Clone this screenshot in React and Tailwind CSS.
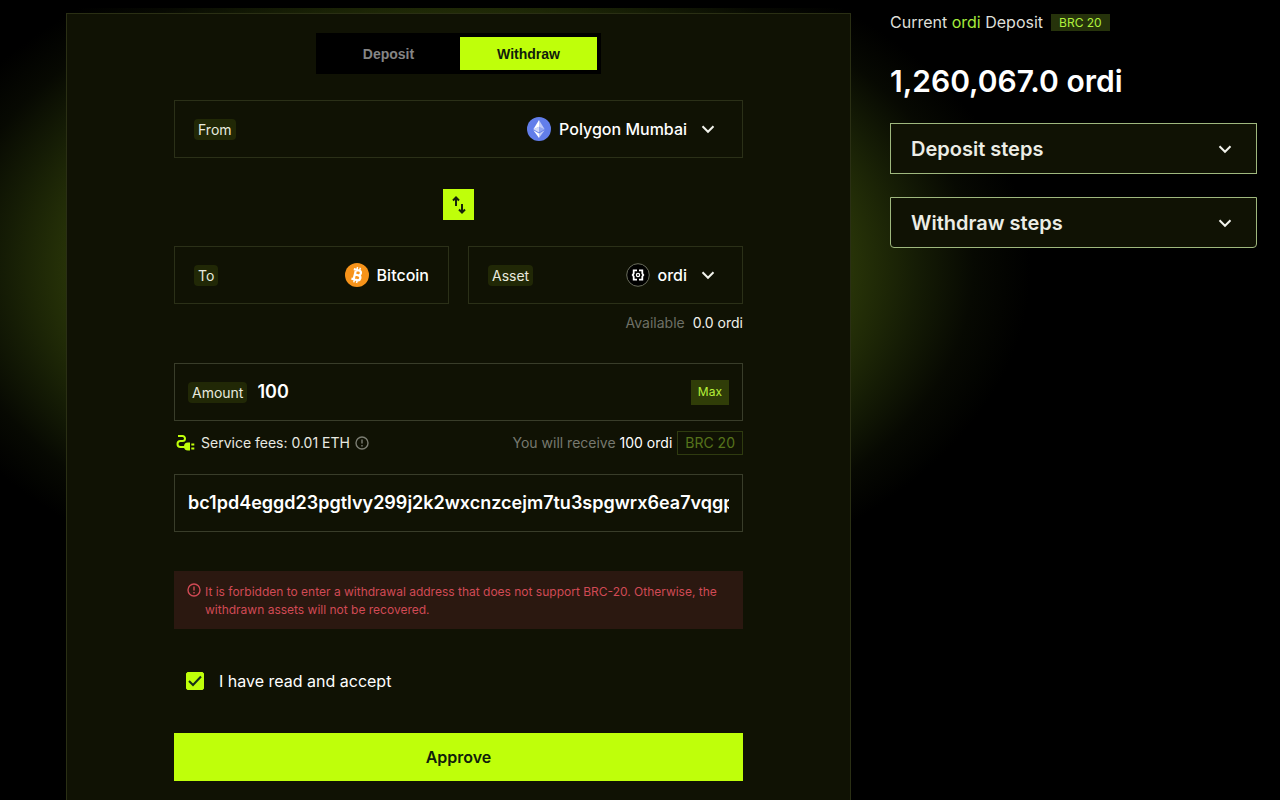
import React, { useState } from 'react';

const TAG = 'rounded bg-[#212806] px-1 text-sm leading-[21px] text-[#e8eadf]';
const BOX = 'flex h-[58px] items-center border';

function Chevron() {
  return (
    <svg viewBox="0 0 24 24" className="size-[22px] shrink-0" fill="none" stroke="#f2f3ec" strokeWidth="2.2" aria-hidden="true">
      <path d="M6 9l6 6 6-6" />
    </svg>
  );
}

function EthIcon() {
  return (
    <svg viewBox="0 0 32 32" className="size-6 shrink-0" aria-hidden="true">
      <circle cx="16" cy="16" r="16" fill="#627eea" />
      <g fill="#fff">
        <path fillOpacity=".6" d="M16 4v8.87l7.5 3.35z" />
        <path d="M16 4L8.5 16.22l7.5-3.35z" />
        <path fillOpacity=".6" d="M16 21.97V28l7.5-10.38z" />
        <path d="M16 28v-6.03l-7.5-4.35z" />
        <path fillOpacity=".3" d="M16 20.57l7.5-4.35-7.5-3.35z" />
        <path fillOpacity=".7" d="M8.5 16.22l7.5 4.35v-7.7z" />
      </g>
    </svg>
  );
}

function BtcIcon() {
  return (
    <svg viewBox="0 0 32 32" className="size-6 shrink-0" aria-hidden="true">
      <circle cx="16" cy="16" r="16" fill="#f7931a" />
      <g transform="rotate(14 16 16)" fill="none" stroke="#fff" strokeWidth="3">
        <path d="M10 9.5h7.2a3.2 3.2 0 0 1 0 6.5H13M17.2 16h.8a3.3 3.3 0 0 1 0 6.6h-8M13 9.5v13" />
        <path strokeWidth="2" d="M14.2 5.5v4M18 5.5v4M14.2 22.5v4M18 22.5v4" />
      </g>
    </svg>
  );
}

function OrdiIcon() {
  return (
    <svg viewBox="0 0 24 24" className="size-6 shrink-0" fill="none" aria-hidden="true">
      <circle cx="12" cy="12" r="11.3" fill="#000" stroke="#6a6d5c" />
      <g stroke="#fff" strokeWidth="1.8">
        <path d="M11 7.3H7.7v3.2L6.7 12l1 1.5v3.2H11M13 7.3h3.3v3.2l1 1.5-1 1.5v3.2H13" />
        <circle cx="12" cy="12" r="1.6" strokeWidth="1.3" />
      </g>
    </svg>
  );
}

function PlugIcon() {
  return (
    <svg viewBox="0 0 20 18" className="h-[18px] w-5 shrink-0" aria-hidden="true">
      <path d="M2 2h4.5a2.5 2.5 0 0 1 0 5H4.500a3 3 0 0 0 0 6H9" fill="none" stroke="#bfff0a" strokeWidth="2" />
      <path d="M14 8.500v8h-2a4 4 0 0 1-4-4 4 4 0 0 1 4-4zM15.300 9.500h3v2h-3zM15.300 13.500h3v2h-3z" fill="#bfff0a" />
    </svg>
  );
}

function InfoIcon() {
  return (
    <svg viewBox="0 0 14 14" className="size-[14px] shrink-0" fill="none" stroke="currentColor" strokeWidth="1.4" aria-hidden="true">
      <circle cx="7" cy="7" r="6" />
      <path d="M7 3.6v4M7 9v1.4" />
    </svg>
  );
}

function Steps({ title, className }) {
  return (
    <button type="button" className={`flex h-[51px] items-center justify-between border border-[#9fb87e] bg-[#101204] px-5 text-left ${className}`}>
      <span className="text-xl font-semibold text-[#ecede6]">{title}</span>
      <Chevron />
    </button>
  );
}

export default function App() {
  const [tab, setTab] = useState('withdraw');
  const [amount, setAmount] = useState('100');
  const [address, setAddress] = useState('bc1pd4eggd23pgtlvy299j2k2wxcnzcejm7tu3spgwrx6ea7vqgp9sx0k4');
  const [accepted, setAccepted] = useState(true);

  const tabStyle = (name) =>
    `w-[137px] cursor-pointer text-sm font-bold ${tab === name ? 'bg-[#bfff0a] text-[#10200a]' : 'text-[#858585]'}`;

  return (
    <div className="flex min-h-screen flex-col bg-black pt-2 font-['Inter',sans-serif] text-white">
      <main className="grid flex-1 grid-cols-[minmax(0,785fr)_minmax(0,367fr)] gap-[39px] bg-[radial-gradient(ellipse_570px_350px_at_36%_260px,#384a08_0%,#303e08_55%,#283408_68%,#151c05_80%,#070902_90%,#000_100%)] pr-[23px] pl-[66px]">
        <section className="mt-[5px] border border-b-0 border-[#2a2f14] bg-[#101204] px-[107px] pt-[19px] pb-4">
          <div className="mx-auto flex h-[41px] w-[285px] justify-between bg-black p-1 font-['Liberation_Sans',sans-serif]">
            <button type="button" className={tabStyle('deposit')} onClick={() => setTab('deposit')}>Deposit</button>
            <button type="button" className={tabStyle('withdraw')} onClick={() => setTab('withdraw')}>Withdraw</button>
          </div>

          <button type="button" className={`${BOX} mt-[26px] w-full justify-between border-[#2b3018] pr-[23px] pl-[19px]`}>
            <span className={TAG}>From</span>
            <span className="flex items-center gap-2">
              <EthIcon />
              <span className="font-medium">Polygon Mumbai</span>
              <span className="pl-[2px]"><Chevron /></span>
            </span>
          </button>

          <button type="button" aria-label="Swap direction" className="mx-auto mt-[31px] grid size-[31px] place-items-center bg-[#bfff0a]">
            <svg viewBox="0 0 18 20" className="h-5 w-[18px]" fill="none" stroke="#16240a" strokeWidth="2" aria-hidden="true">
              <path d="M6 11V3M3 5.5l3-3 3 3M12 9v8M9 14.5l3 3 3-3" />
            </svg>
          </button>

          <div className="mt-[26px] grid grid-cols-2 gap-[19px]">
            <div className={`${BOX} justify-between border-[#2b3018] px-[19px]`}>
              <span className={TAG}>To</span>
              <span className="flex items-center gap-2">
                <BtcIcon />
                <span className="font-medium">Bitcoin</span>
              </span>
            </div>
            <button type="button" className={`${BOX} justify-between border-[#2b3018] pr-[23px] pl-[19px]`}>
              <span className={TAG}>Asset</span>
              <span className="flex items-center gap-2">
                <OrdiIcon />
                <span className="font-medium">ordi</span>
                <span className="pl-[2px]"><Chevron /></span>
              </span>
            </button>
          </div>
          <p className="mt-[9px] text-right text-sm text-[#6e7066]">
            Available <span className="ml-1 text-[#f0f1ea]">0.0 ordi</span>
          </p>

          <div className={`${BOX} mt-[30px] gap-[10px] border-[#393d2a] px-[13px]`}>
            <label htmlFor="amount" className={TAG}>Amount</label>
            <input id="amount" value={amount} onChange={(e) => setAmount(e.target.value)}
              className="min-w-0 flex-1 bg-transparent text-lg font-semibold outline-none" />
            <button type="button" className="h-[25px] bg-[#303d08] px-[7px] text-xs text-[#b6f03a]">Max</button>
          </div>

          <div className="mt-[10px] flex h-6 items-center justify-between text-sm">
            <div className="flex items-center gap-[5px] pl-[2px] text-[#e8e9e1]">
              <PlugIcon />
              <span>Service fees: 0.01 ETH</span>
              <span className="text-[#7b7d72]"><InfoIcon /></span>
            </div>
            <div className="flex items-center gap-[5px]">
              <span className="text-[#77796f]">You will receive <span className="text-white">100 ordi</span></span>
              <span className="border border-[#2f3b10] px-[7px] leading-[22px] text-[#56731b]">BRC 20</span>
            </div>
          </div>

          <div className={`${BOX} mt-[19px] border-[#393d2a] px-[13px]`}>
            <input aria-label="Withdrawal address" value={address} onChange={(e) => setAddress(e.target.value)}
              className="w-full bg-transparent text-lg font-semibold outline-none" />
          </div>

          <div className="mt-[39px] flex gap-1 bg-[#2b1810] px-[13px] pt-3 pb-[10px] text-xs leading-[18px] text-[#d14a55]">
            <InfoIcon />
            <p>It is forbidden to enter a withdrawal address that does not support BRC-20. Otherwise, the withdrawn assets will not be recovered.</p>
          </div>

          <label className="mt-10 flex h-6 w-fit items-center gap-[15px] pl-3">
            <span className="relative size-[18px]">
              <input type="checkbox" checked={accepted} onChange={(e) => setAccepted(e.target.checked)}
                className="peer block size-[18px] appearance-none rounded-[2px] border border-[#bfff0a] checked:bg-[#bfff0a]" />
              <svg viewBox="0 0 18 18" className="pointer-events-none absolute inset-0 hidden peer-checked:block" fill="none" stroke="#16301a" strokeWidth="2" aria-hidden="true">
                <path d="M3 9l4 4 8-8.5" />
              </svg>
            </span>
            <span>I have read and accept</span>
          </label>

          <button type="button" className="mt-10 h-12 w-full bg-[#bfff0a] font-semibold text-[#10200a]">Approve</button>
        </section>

        <aside>
          <div className="flex items-center gap-2 pt-[2px]">
            <span className="text-[#dedfd8]">Current <span className="text-[#a6ea3c]">ordi</span> Deposit</span>
            <span className="bg-[#26330b] px-2 text-xs leading-[17px] text-[#b0f03c]">BRC 20</span>
          </div>
          <p className="mt-[29px] text-3xl leading-9 font-semibold">1,260,067.0 ordi</p>
          <div className="mt-6 flex flex-col gap-[23px]">
            <Steps title="Deposit steps" className="" />
            <Steps title="Withdraw steps" className="rounded-b" />
          </div>
        </aside>
      </main>
    </div>
  );
}
